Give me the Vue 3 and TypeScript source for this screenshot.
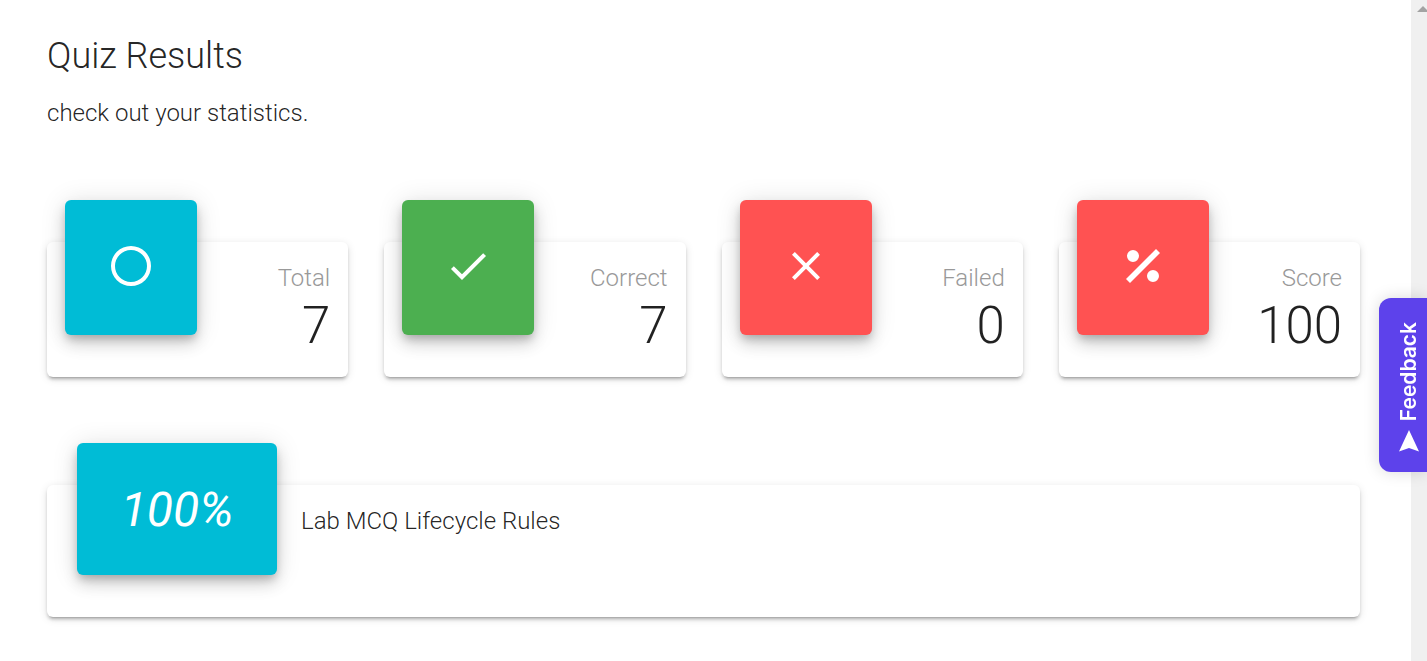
<script setup lang="ts">
interface Stat {
  label: string
  value: number
  tone: string
  icon: string
}

const stats: Stat[] = [
  {
    label: 'Total',
    value: 7,
    tone: 'cyan',
    icon: 'M12,20A8,8 0 0,1 4,12A8,8 0 0,1 12,4A8,8 0 0,1 20,12A8,8 0 0,1 12,20M12,2A10,10 0 0,0 2,12A10,10 0 0,0 12,22A10,10 0 0,0 22,12A10,10 0 0,0 12,2Z',
  },
  {
    label: 'Correct',
    value: 7,
    tone: 'green',
    icon: 'M21,7L9,19L3.5,13.5L4.91,12.09L9,16.17L19.59,5.59L21,7Z',
  },
  {
    label: 'Failed',
    value: 0,
    tone: 'red',
    icon: 'M19,6.41L17.59,5L12,10.59L6.41,5L5,6.41L10.59,12L5,17.59L6.41,19L12,13.41L17.59,19L19,17.59L13.41,12L19,6.41Z',
  },
  {
    label: 'Score',
    value: 100,
    tone: 'red',
    icon: 'M18.5,3.5L3.5,18.5L5.5,20.5L20.5,5.5M7,4A3,3 0 0,0 4,7A3,3 0 0,0 7,10A3,3 0 0,0 10,7A3,3 0 0,0 7,4M17,14A3,3 0 0,0 14,17A3,3 0 0,0 17,20A3,3 0 0,0 20,17A3,3 0 0,0 17,14Z',
  },
]
</script>

<template>
  <div class="page">
    <main class="content">
      <header class="heading">
        <h1>Quiz Results</h1>
        <p>check out your statistics.</p>
      </header>

      <section class="stats">
        <article v-for="stat in stats" :key="stat.label" class="card stat">
          <div class="tile" :class="stat.tone">
            <svg class="icon" viewBox="0 0 24 24" aria-hidden="true">
              <path :d="stat.icon" />
            </svg>
          </div>
          <div class="figures">
            <div class="label">{{ stat.label }}</div>
            <div class="value">{{ stat.value }}</div>
          </div>
        </article>
      </section>

      <article class="card result">
        <div class="tile wide cyan"><em>100%</em></div>
        <h2>Lab MCQ Lifecycle Rules</h2>
      </article>
    </main>

    <div class="track" aria-hidden="true">
      <svg viewBox="0 0 16 16"><path d="M12 6L18 12H6Z" /></svg>
    </div>

    <button class="feedback" type="button">
      <svg viewBox="0 0 20 22" aria-hidden="true">
        <path d="M10 0L20 21.5L10 18L0 21.5Z" />
      </svg>
      <span>Feedback</span>
    </button>
  </div>
</template>

<style>
body {
  margin: 0;
  background: #fff;
}
</style>

<style scoped>
.page {
  display: flex;
  min-height: 100vh;
  font-family: Roboto, "Liberation Sans", sans-serif;
  font-weight: 300;
  color: rgba(0, 0, 0, 0.87);
}

.content {
  flex: 1;
  padding: 32px 51px 44px 47px;
}

.heading {
  margin-bottom: 111px;
}

h1,
h2,
p {
  margin: 0;
  font-weight: 300;
}

h1 {
  font-size: 36px;
  line-height: 48px;
}

p {
  margin-top: 15px;
  font-size: 24px;
  line-height: 36px;
}

.stats {
  display: grid;
  grid-template-columns: repeat(4, 1fr);
  gap: 36px;
}

.card {
  display: flex;
  align-items: flex-start;
  border-radius: 6px;
  background: #fff;
  box-shadow:
    0 4px 2px -3px rgba(0, 0, 0, 0.2),
    0 3px 3px 0 rgba(0, 0, 0, 0.14),
    0 2px 8px 0 rgba(0, 0, 0, 0.12);
}

.stat {
  justify-content: space-between;
  padding: 0 18px;
}

.tile {
  display: flex;
  align-items: center;
  justify-content: center;
  box-sizing: border-box;
  width: 132px;
  height: 135px;
  margin-top: -42px;
  margin-bottom: 42px;
  padding-bottom: 3px;
  border-radius: 6px;
  color: #fff;
  box-shadow:
    0 5px 8px -2px rgba(0, 0, 0, 0.2),
    0 9px 15px 0 rgba(0, 0, 0, 0.14),
    0 2px 27px 0 rgba(0, 0, 0, 0.12);
}

.tile.wide {
  width: 200px;
  height: 132px;
  padding-bottom: 0;
  font-size: 48px;
  font-weight: 400;
}

.cyan {
  background: #00bcd6;
}

.green {
  background: #4caf50;
}

.red {
  background: #ff5252;
}

.icon {
  width: 48px;
  height: 48px;
  fill: currentColor;
}

.figures {
  padding-top: 18px;
  text-align: right;
}

.label {
  font-size: 24px;
  line-height: 36px;
  color: #999;
}

.value {
  font-size: 51px;
  line-height: 60px;
}

.result {
  gap: 24px;
  margin-top: 108px;
  padding: 0 30px;
}

h2 {
  padding-top: 18px;
  font-size: 24px;
  line-height: 36px;
}

.track {
  width: 16px;
  background: #f0f0f0;
}

.track svg {
  display: block;
  width: 16px;
  height: 16px;
  fill: #a3a3a3;
}

.feedback {
  position: fixed;
  top: 298px;
  right: 0;
  display: flex;
  flex-direction: column-reverse;
  align-items: center;
  justify-content: center;
  gap: 8px;
  width: 48px;
  height: 174px;
  padding: 4px 0 0 12px;
  border: 0;
  border-radius: 12px 0 0 12px;
  background: #5d42eb;
  color: #fff;
  font: 600 21px/24px Inter, "Liberation Sans", sans-serif;
  box-shadow: 0 0 16px rgba(0, 0, 0, 0.15);
}

.feedback svg {
  order: -1;
  width: 20px;
  height: 22px;
  fill: currentColor;
}

.feedback span {
  writing-mode: vertical-rl;
  transform: rotate(180deg);
}
</style>
